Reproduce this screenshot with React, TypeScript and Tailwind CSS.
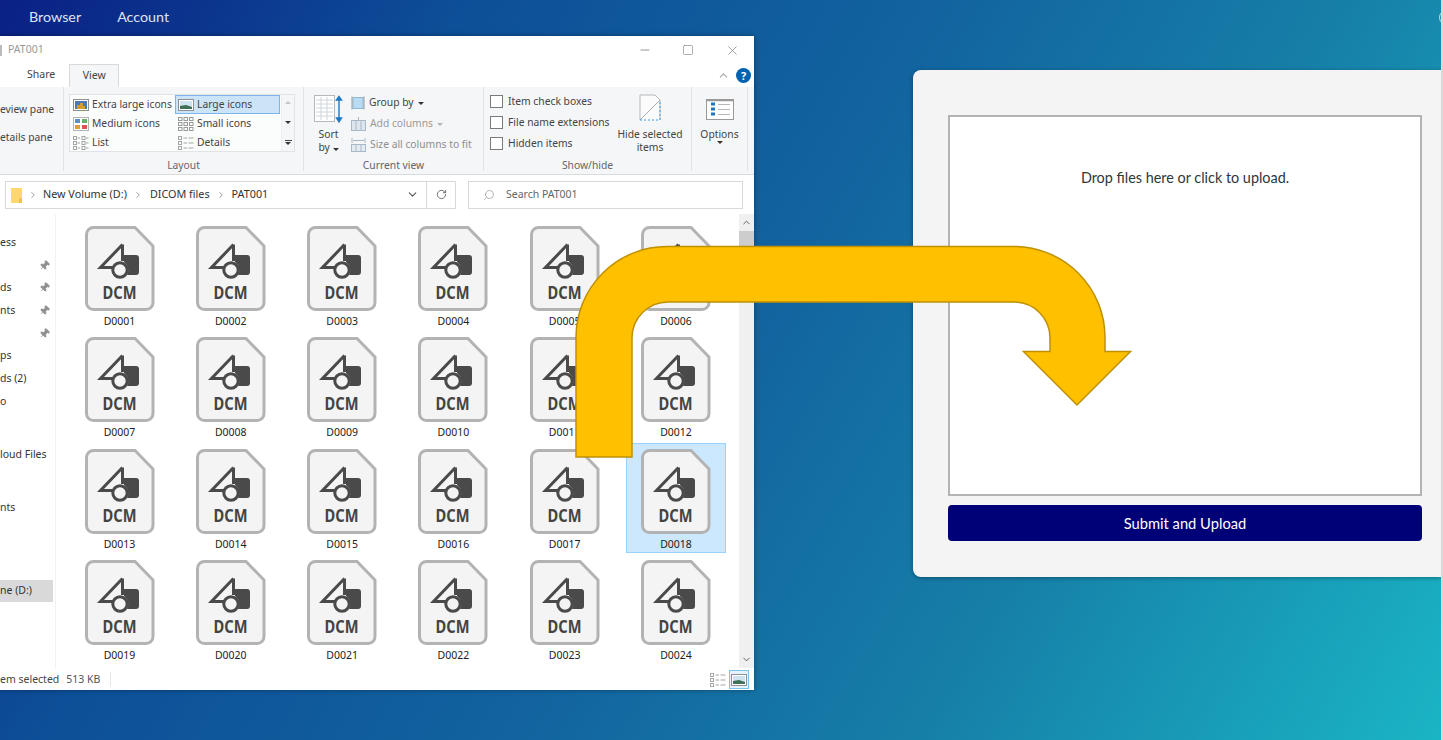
import { ChevronDown, ChevronRight, ChevronUp, Minus, Pin, RotateCw, Search, Square, X } from 'lucide-react';

const FILES = Array.from({ length: 24 }, (_, i) => `D${String(i + 1).padStart(4, '0')}`);

const NAV_ROWS = [
  { text: 'ess' },
  { text: '', pin: true },
  { text: 'ds', pin: true },
  { text: 'nts', pin: true },
  { text: '', pin: true },
  { text: 'ps' },
  { text: 'ds (2)' },
  { text: 'o' },
  { text: 'loud Files', cls: 'mt-[30px]' },
  { text: 'nts', cls: 'mt-[31px]' },
  { text: 'ne (D:)', cls: 'mt-[60px] bg-[#d9d9d9]' },
];

const explorerFont = "font-['Noto_Sans',sans-serif]";

const DicomIcon = () => (
  <svg width="70" height="86" viewBox="0 0 70 86" className="shrink-0">
    <path
      d="M8.5 1.5H50L68 20V76.5A7 7 0 0 1 61 83.5H8.5A7 7 0 0 1 1.5 76.5V8.5A7 7 0 0 1 8.5 1.5Z"
      fill="#f4f4f4"
      stroke="#b3b3b3"
      strokeWidth="3"
    />
    <path d="M37.5 18.5V35M37.5 18.5L15.5 41.5H28" fill="none" stroke="#4a4a4a" strokeWidth="3" />
    <path d="M39 29H51A3 3 0 0 1 54 32V46A3 3 0 0 1 51 49H42A10 10 0 0 0 39 36Z" fill="#4a4a4a" />
    <circle cx="35" cy="44" r="7.2" fill="#f4f4f4" stroke="#4a4a4a" strokeWidth="3" />
    <text
      x="34.5"
      y="72.5"
      textAnchor="middle"
      fontFamily="Noto Sans, sans-serif"
      fontWeight="700"
      fontSize="17.5"
      fill="#444444"
      textLength="34"
      lengthAdjust="spacingAndGlyphs"
    >
      DCM
    </text>
  </svg>
);

const FileTile = ({ name, selected }: { name: string; selected?: boolean }) => (
  <div
    className={`flex h-[110px] w-[100px] flex-col items-center border pt-[5px] ${
      selected ? 'border-[#99d1ff] bg-[#cce8ff]' : 'border-transparent'
    }`}
  >
    <DicomIcon />
    <span className="mt-[2px] text-[10.5px] leading-[14px] text-[#222]">{name}</span>
  </div>
);

const Thumb = ({ kind }: { kind: 'xl' | 'lg' | 'md' | 'sm' | 'list' | 'details' }) => {
  if (kind === 'xl' || kind === 'lg') {
    return (
      <svg width="16" height="14" viewBox="0 0 16 14" className="shrink-0">
        <rect x="0.5" y="1.5" width="15" height="11" fill="#fff" stroke="#8f8f8f" />
        <rect x="2" y="3" width="12" height="8" fill={kind === 'xl' ? '#4d78b8' : '#cfe3ee'} />
        {kind === 'xl' ? (
          <path d="M4 11V7H7V5H10V8H12V11Z" fill="#d99a2b" />
        ) : (
          <path d="M2 11V8L8 7L14 9V11Z" fill="#3f6f55" />
        )}
      </svg>
    );
  }
  if (kind === 'md') {
    return (
      <svg width="16" height="14" viewBox="0 0 16 14" className="shrink-0">
        <rect x="0.5" y="0.5" width="15" height="13" fill="#fff" stroke="#b5b5b5" />
        <rect x="2" y="2" width="5" height="4" fill="#5b8fd0" />
        <rect x="9" y="2" width="5" height="4" fill="#6fae6a" />
        <rect x="2" y="8" width="5" height="4" fill="#e0a030" />
        <rect x="9" y="8" width="5" height="4" fill="#d9534f" />
      </svg>
    );
  }
  if (kind === 'sm') {
    return (
      <svg width="16" height="14" viewBox="0 0 16 14" fill="none" stroke="#9a9a9a" className="shrink-0">
        {[0.5, 5.5, 10.5].map(y =>
          [0.5, 6, 11.5].map(x => <rect key={`${x}-${y}`} x={x} y={y} width="3.5" height="3" />)
        )}
      </svg>
    );
  }
  if (kind === 'list') {
    return (
      <svg width="16" height="14" viewBox="0 0 16 14" fill="none" stroke="#a5a5a5" className="shrink-0">
        {[0.5, 5.5, 10.5].map(y => (
          <g key={y}>
            <rect x="0.5" y={y} width="3" height="3" />
            <path d={`M4.5 ${y + 1.5}H7`} />
            <rect x="9" y={y} width="3" height="3" />
            <path d={`M13 ${y + 1.5}H15.5`} />
          </g>
        ))}
      </svg>
    );
  }
  return (
    <svg width="16" height="14" viewBox="0 0 16 14" fill="none" stroke="#a5a5a5" className="shrink-0">
      {[0.5, 5.5, 10.5].map(y => (
        <g key={y}>
          <rect x="0.5" y={y} width="3" height="3" />
          <path d={`M5.5 ${y + 1.5}H9M10.5 ${y + 1.5}H15.5`} />
        </g>
      ))}
    </svg>
  );
};

const LayoutItem = ({ kind, label, selected }: { kind: 'xl' | 'lg' | 'md' | 'sm' | 'list' | 'details'; label: string; selected?: boolean }) => (
  <div
    className={`flex h-[19px] w-[105px] items-center gap-[3px] border pl-[2px] ${
      selected ? 'border-[#7eb4ea] bg-[#cce4f7]' : 'border-transparent'
    }`}
  >
    <Thumb kind={kind} />
    <span className="whitespace-nowrap">{label}</span>
  </div>
);

const Caret = ({ light }: { light?: boolean }) => (
  <span
    className={`inline-block h-0 w-0 border-x-[3px] border-t-[3px] border-x-transparent ${
      light ? 'border-t-[#b5b5b5]' : 'border-t-[#333]'
    }`}
  />
);

const CheckRow = ({ label }: { label: string }) => (
  <div className="flex h-[21px] items-center gap-[5px] whitespace-nowrap">
    <span className="h-[13px] w-[13px] border border-[#7a7a7a] bg-white" />
    <span>{label}</span>
  </div>
);

const GroupLabel = ({ children }: { children: string }) => (
  <div className="absolute inset-x-0 bottom-[-1px] text-center leading-[14px] text-[#666]">{children}</div>
);

const Ribbon = () => (
  <div className="flex h-[88px] shrink-0 border-b border-[#dadbdc] bg-[#f5f6f7] pb-[3px] text-[10.3px] text-[#444]">
    <div className="relative w-[64px] border-r border-[#e2e3e4] pt-[15px] leading-[14px]">
      <div className="whitespace-nowrap">eview pane</div>
      <div className="mt-[14px] whitespace-nowrap">etails pane</div>
    </div>

    <div className="relative w-[240px] border-r border-[#e2e3e4] pl-[5px] pt-[7px]">
      <div className="flex h-[58px] w-[226px] border border-[#e2e3e4] bg-[#fbfcfc]">
        <div className="w-[211px]">
          <div className="flex flex-wrap">
            <LayoutItem kind="xl" label="Extra large icons" />
            <LayoutItem kind="lg" label="Large icons" selected />
            <LayoutItem kind="md" label="Medium icons" />
            <LayoutItem kind="sm" label="Small icons" />
            <LayoutItem kind="list" label="List" />
            <LayoutItem kind="details" label="Details" />
          </div>
        </div>
        <div className="ml-auto flex w-[13px] flex-col items-center justify-between border-l border-[#eeeeee] bg-[#f5f6f7] py-[6px]">
          <span className="h-0 w-0 border-x-[3px] border-b-[3px] border-x-transparent border-b-[#c4c4c4]" />
          <Caret />
          <span className="flex flex-col items-center gap-[1px]">
            <span className="h-px w-[7px] bg-[#444]" />
            <Caret />
          </span>
        </div>
      </div>
      <GroupLabel>Layout</GroupLabel>
    </div>

    <div className="relative flex w-[180px] border-r border-[#e2e3e4] pl-[6px] pt-[8px]">
      <div className="flex w-[37px] flex-col items-center">
        <svg width="30" height="29" viewBox="0 0 30 29">
          <rect x="0.5" y="0.5" width="20" height="26" fill="#fff" stroke="#b8b8b8" />
          <path d="M2 5H19M2 9H19M2 13H19M2 17H19M2 21H19M7 2V25M13 2V25" stroke="#cfd6dc" />
          <path d="M25 2V26M22.5 5L25 1.5L27.5 5ZM22.5 23L25 27L27.5 23Z" stroke="#1e78c2" strokeWidth="1.4" fill="#1e78c2" />
        </svg>
        <div className="mt-[4px] text-center leading-[13px]">
          Sort
          <br />
          by <Caret />
        </div>
      </div>
      <div className="ml-[4px] -mt-[2px] flex flex-col gap-[1px]">
        <div className="flex h-[20px] items-center gap-[4px] whitespace-nowrap">
          <svg width="14" height="14" viewBox="0 0 14 14">
            <rect x="2" y="1.5" width="10" height="11" fill="#b9dcf5" stroke="#8fb6d3" />
            <path d="M1 .5V13.5M13 .5V13.5" stroke="#999" />
          </svg>
          Group by <Caret />
        </div>
        <div className="flex h-[20px] items-center gap-[4px] whitespace-nowrap text-[#9a9a9a]">
          <svg width="15" height="14" viewBox="0 0 15 14" fill="none" stroke="#a9b8c6">
            <rect x="0.5" y="3.5" width="14" height="10" fill="#dde6ee" />
            <path d="M5 3V14M10 3V14M7.5 0V3" />
          </svg>
          Add columns <Caret light />
        </div>
        <div className="flex h-[20px] items-center gap-[4px] whitespace-nowrap text-[#8f8f8f]">
          <svg width="15" height="14" viewBox="0 0 15 14" fill="none" stroke="#a9b8c6">
            <path d="M1 0V5M14 0V5M2 2.5H13" />
            <rect x="0.5" y="6.5" width="14" height="7" fill="#e4ebf1" />
            <path d="M5 7V14M10 7V14" />
          </svg>
          Size all columns to fit
        </div>
      </div>
      <GroupLabel>Current view</GroupLabel>
    </div>

    <div className="relative flex w-[208px] border-r border-[#e2e3e4] pl-[6px] pt-[4px]">
      <div className="flex flex-col">
        <CheckRow label="Item check boxes" />
        <CheckRow label="File name extensions" />
        <CheckRow label="Hidden items" />
      </div>
      <div className="ml-[8px] flex flex-col items-center">
        <svg width="22" height="27" viewBox="0 0 22 27" fill="none" className="mt-[3px]">
          <path d="M1 26V1H16L21 6V26" fill="#fbfbfb" stroke="#b8b8b8" />
          <path d="M1 26L21 6" stroke="#a8a8a8" />
          <path d="M1 26H21V6" stroke="#3a9be8" strokeDasharray="2 2" />
        </svg>
        <div className="mt-[7px] whitespace-nowrap text-center leading-[13px]">
          Hide selected
          <br />
          items
        </div>
      </div>
      <GroupLabel>Show/hide</GroupLabel>
    </div>

    <div className="relative flex w-[56px] flex-col items-center border-r border-[#e2e3e4] pt-[12px]">
      <svg width="28" height="21" viewBox="0 0 28 21" fill="none">
        <rect x="0.5" y="0.5" width="27" height="20" fill="#fff" stroke="#999" />
        <path d="M1 1.5H27" stroke="#999" strokeWidth="1.5" />
        <path d="M5 5H9M5 10H9M5 15H9" stroke="#1e78c2" strokeWidth="3" />
        <path d="M12 5.5H24M12 10.5H24M12 15.5H24" stroke="#b8b8b8" />
      </svg>
      <div className="mt-[7px] leading-[14px]">Options</div>
      <Caret />
    </div>
  </div>
);

const ExplorerWindow = () => (
  <div className={`absolute left-0 top-[36px] flex h-[654px] w-[754px] flex-col bg-white text-[#222] shadow-[0_0_5px_rgba(0,0,0,0.35)] ${explorerFont}`}>
    <div className="flex h-[28px] shrink-0 items-center text-[10.5px] text-[#999]">
      <span className="h-[11px] w-[2px] bg-[#bbb]" />
      <span className="ml-[6px]">PAT001</span>
      <div className="ml-auto flex items-center text-[#777]">
        <Minus size={14} strokeWidth={1.3} />
        <Square size={12} strokeWidth={1.2} className="ml-[30px]" />
        <X size={15} strokeWidth={1.1} className="ml-[31px] mr-[14px]" />
      </div>
    </div>

    <div className="flex h-[23px] shrink-0 items-end text-[10.5px] text-[#444]">
      <span className="ml-[27px] pb-[4px]">Share</span>
      <span className="ml-[14px] flex h-[23px] w-[50px] items-center justify-center border-x border-t border-[#d9d9d9] bg-[#f5f6f7]">
        View
      </span>
      <div className="mb-[4px] ml-auto mr-[3px] flex items-center gap-[6px]">
        <ChevronUp size={13} className="text-[#a8a8a8]" />
        <span className="flex h-[15px] w-[15px] items-center justify-center rounded-full bg-[#0063b1] text-[11px] font-bold leading-none text-white">
          ?
        </span>
      </div>
    </div>

    <Ribbon />

    <div className="flex h-[39px] shrink-0 items-center pl-[5px] text-[10.8px]">
      <div className="flex h-[28px] w-[422px] items-center border border-[#d9d9d9] pl-[5px] text-[#333]">
        <svg width="12" height="16" viewBox="0 0 12 16" className="shrink-0">
          <path d="M0 1H11V16H0Z" fill="#ffd76e" />
          <path d="M8 11H11V16H8Z" fill="#f0c050" />
        </svg>
        <ChevronRight size={10} className="ml-[5px] text-[#888]" />
        <span className="ml-[5px]">New Volume (D:)</span>
        <ChevronRight size={10} className="ml-[6px] text-[#888]" />
        <span className="ml-[7px]">DICOM files</span>
        <ChevronRight size={10} className="ml-[6px] text-[#888]" />
        <span className="ml-[6px]">PAT001</span>
        <ChevronDown size={13} className="ml-auto mr-[7px] text-[#555]" />
      </div>
      <div className="flex h-[28px] w-[29px] items-center justify-center border-y border-r border-[#d9d9d9]">
        <RotateCw size={11} className="text-[#666]" />
      </div>
      <div className="ml-[12px] flex h-[28px] w-[275px] items-center border border-[#d9d9d9] pl-[14px] text-[10.5px] text-[#666]">
        <Search size={12} strokeWidth={1.2} className="-scale-x-100 text-[#888]" />
        <span className="ml-[11px]">Search PAT001</span>
      </div>
    </div>

    <div className="flex min-h-0 flex-1">
      <div className="w-[56px] shrink-0 border-r border-[#f2f2f2] pt-[17px] text-[10.5px] text-[#333]">
        {NAV_ROWS.map((row, i) => (
          <div key={i} className={`flex h-[22.75px] w-[53px] items-center whitespace-nowrap ${row.cls ?? ''}`}>
            {row.text}
            {row.pin && <Pin size={11} fill="#8f8f8f" strokeWidth={1.5} className="ml-auto mr-[3px] rotate-45 text-[#8f8f8f]" />}
          </div>
        ))}
      </div>

      <div className="grid flex-1 grid-cols-[repeat(6,100px)] content-start gap-x-[11.3px] gap-y-[1.3px] pl-[13.5px] pt-[6px]">
        {FILES.map(name => (
          <FileTile key={name} name={name} selected={name === 'D0018'} />
        ))}
      </div>

      <div className="flex w-[15px] shrink-0 flex-col items-center bg-[#f0f0f0]">
        <ChevronUp size={11} className="my-[3px] text-[#555]" />
        <div className="h-[15px] w-full bg-[#cdcdcd]" />
        <ChevronDown size={11} className="mb-[3px] mt-auto text-[#555]" />
      </div>
    </div>

    <div className="flex h-[22px] shrink-0 items-center pt-[1px] text-[10.5px] text-[#555]">
      <span className="whitespace-nowrap text-[#444]">em selected</span>
      <span className="ml-[7px] border-r border-[#e8e8e8] pr-[10px]">513 KB</span>
      <div className="ml-auto mr-[5px] flex items-center gap-[3px]">
        <Thumb kind="details" />
        <span className="flex h-[19px] w-[20px] items-center justify-center border border-[#7ec4e8] bg-[#e5f3fb]">
          <Thumb kind="lg" />
        </span>
      </div>
    </div>
  </div>
);

const UploadPanel = () => (
  <div className="mr-[2px] mt-[36px] flex h-[507px] w-[528px] flex-col rounded-l-[8px] bg-[#f4f4f4] pl-[35px] pr-[19px] pt-[45px] shadow-[0_1px_4px_rgba(0,0,0,0.35)]">
    <div className="flex h-[381px] justify-center border-2 border-[#b3b3b3] bg-white pt-[51px] text-[14.4px] leading-[20px] text-[#2f3640]">
      Drop files here or click to upload.
    </div>
    <button className="mt-[9px] h-[36px] rounded-[4px] bg-[#000077] pt-[1px] text-[14.7px] text-white">Submit and Upload</button>
  </div>
);

const BentArrow = () => (
  <svg width="1443" height="740" viewBox="0 0 1443 740" className="pointer-events-none absolute left-0 top-0">
    <path
      d="M576 457V337A91 91 0 0 1 667 246.5H1014A91 91 0 0 1 1105 337V351.5H1130.5L1077 405L1023.5 351.5H1050V338A36 36 0 0 0 1014 302H668A36 36 0 0 0 632 338V457Z"
      fill="#ffc000"
      stroke="#bf9000"
      strokeWidth="1.5"
    />
  </svg>
);

export default function App() {
  return (
    <div className="relative h-[740px] w-[1443px] overflow-hidden bg-[linear-gradient(120deg,#0a2085_0%,#0d4f98_25%,#12639f_50%,#167fa8_72%,#1ab5c5_100%)] font-['Lato',sans-serif]">
      <div className="flex h-[34px] items-center gap-[36px] pl-[29px] text-[14.3px] text-[#dde4f2]">
        <span>Browser</span>
        <span>Account</span>
      </div>
      <span className="absolute right-[-11px] top-[10px] h-[15px] w-[15px] rounded-full border border-[#cfe0ea]" />
      <span className="absolute bottom-0 right-0 top-0 w-[2px] bg-[#d8d8d8]" />
      <div className="flex justify-end">
        <UploadPanel />
      </div>
      <ExplorerWindow />
      <BentArrow />
    </div>
  );
}
